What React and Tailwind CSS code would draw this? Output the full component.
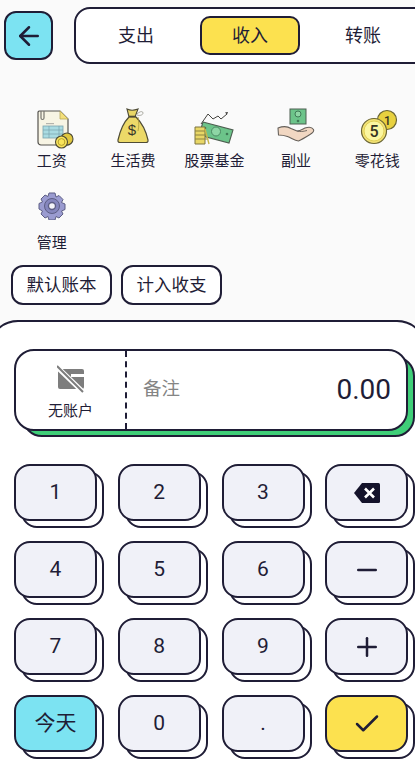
import React from "react";
import { ArrowLeft, Check, Minus, Plus } from "lucide-react";

const ink = "#1f1d36";

const SalaryIcon = () => (
  <svg width="42" height="42" viewBox="-3 -1 42 42" className="overflow-visible">
    <path d="M5 3h21l8 8v26H7a3 3 0 0 1-3-3V4z" fill="#f7f4e4" stroke="#55534f" strokeWidth="1.2" />
    <path d="M26 3l8 8h-8z" fill="#f4df7a" stroke="#b9a95a" strokeWidth="0.8" />
    <path d="M7 3v7a1.5 1.5 0 0 0 3 0V3" fill="none" stroke="#77756f" strokeWidth="1.2" />
    <rect x="12" y="15" width="8" height="1.2" fill="#b5b4ad" />
    <rect x="9" y="18" width="20" height="12" fill="#a9dbe2" stroke="#7aa4ad" strokeWidth="0.8" />
    <path d="M9 22h20M9 26h20M15 18v12M25 18v12" stroke="#7aa4ad" strokeWidth="0.7" />
    <circle cx="33" cy="31" r="6" fill="#e0c73f" stroke="#4e4b35" strokeWidth="1.1" />
    <circle cx="27.5" cy="34" r="6" fill="#f9e45b" stroke="#4e4b35" strokeWidth="1.1" />
    <circle cx="27.5" cy="34" r="3.4" fill="none" stroke="#b39f2c" strokeWidth="1" />
  </svg>
);

const BagIcon = () => (
  <svg width="42" height="42" viewBox="-1 1 42 42" className="overflow-visible">
    <path d="M14 3c3 1.500 7 1.500 11 0l-3 8h-6z" fill="#e9d766" stroke="#4e4b35" strokeWidth="1.1" />
    <path d="M16 11h7c5 5 10 14 12 23 .3 1.600-.5 2.500-2 2.500H7c-1.500 0-2.300-.9-2-2.500 2-9 6-18 11-23z" fill="#ecd968" stroke="#4e4b35" strokeWidth="1.2" />
    <path d="M16 10.500h7" stroke="#4e4b35" strokeWidth="1.6" />
    <path d="M24 8c3-3 6-3 6-1s-3 3-6 2" fill="none" stroke="#a9a9a0" strokeWidth="1" />
    <path d="M25 11c1 5 1 10 0 14" fill="none" stroke="#a89a3c" strokeWidth="0.8" />
    <text x="19" y="29" textAnchor="middle" fontSize="15" fontFamily="Liberation Sans, sans-serif" fill="#3a382b">$</text>
  </svg>
);

const StockIcon = () => (
  <svg width="42" height="42" viewBox="0 0 42 42">
    <path d="M8 17L15 7l5 5 5-3 3 3 6-5" fill="none" stroke="#44433f" strokeWidth="1" />
    <path d="M35 5l-3 .5 2 2z" fill="#33322f" />
    <path d="M10 15l30 8-4 13-30-8z" fill="#6cc48a" stroke="#4d5e50" strokeWidth="1.1" />
    <circle cx="23" cy="24.500" r="4.500" fill="#8ed6a5" stroke="#4c8a63" strokeWidth="1" />
    <circle cx="34" cy="27" r="1.300" fill="#3f7a56" />
    <circle cx="12" cy="21" r="1.300" fill="#3f7a56" />
    <path d="M2 20h10v17H2z" fill="#e9d766" stroke="#7d7440" strokeWidth="1" />
    <path d="M2 24h11M2 28h12M2 32h13" stroke="#8d8342" strokeWidth="1" />
    <path d="M12 22l4 15" stroke="#c8b64a" strokeWidth="1.4" />
  </svg>
);

const HandIcon = () => (
  <svg width="42" height="42" viewBox="0 0 42 42">
    <rect x="15" y="2" width="16" height="15" fill="#6cc48a" stroke="#4d5e50" strokeWidth="1" />
    <circle cx="23" cy="7" r="3" fill="#8ed6a5" stroke="#3f7a56" strokeWidth="1" />
    <circle cx="23" cy="14" r="1.300" fill="#3f7a56" />
    <path d="M3 21c5-2 10-1.500 13 .5l6 2.500c2 .3 5-1.500 8-3 3-1 7-1 8.500 1.500 1 2-1 3.500-3.500 5-4 2.500-8 5-11.500 6.500-4-.5-7-3-11-4.500-3-1-6-1.500-9-1.500z" fill="#f1d7c2" stroke="#66605a" strokeWidth="1.100" strokeLinejoin="round" />
    <path d="M22 24c3 1 6 .5 10-.5" fill="none" stroke="#66605a" strokeWidth="0.9" />
  </svg>
);

const CoinsIcon = () => (
  <svg width="42" height="42" viewBox="-2 0 42 42" className="overflow-visible">
    <circle cx="29" cy="13" r="9.500" fill="#e8d13f" stroke="#6a6534" strokeWidth="1.200" />
    <text x="29.500" y="17.500" textAnchor="middle" fontSize="12" fontWeight="500" fontFamily="Roboto, sans-serif" fill="#35331f">1</text>
    <circle cx="16" cy="24" r="12.500" fill="#f2e275" stroke="#6a6534" strokeWidth="1.200" />
    <circle cx="16" cy="24" r="10" fill="#fbf6a0" stroke="#e0cf55" strokeWidth="1" />
    <text x="16" y="30" textAnchor="middle" fontSize="16" fontWeight="500" fontFamily="Roboto, sans-serif" fill="#35331f">5</text>
  </svg>
);

const GearIcon = () => (
  <svg width="28" height="28" viewBox="0 0 28 28" className="mb-[8px]">
    <path d="M11 1h6l1 4 3-1.500 4 4-1.500 3 3.500 1.500v5.500l-3.500 1.500 1.500 3-4 4-3-1.500-1 3.500h-6l-1-3.500-3 1.500-4-4 1.500-3L1 17V11.500L4.500 10 3 7l4-4 3 1.500z" fill="#9a9bd0" stroke="#5d5e85" strokeWidth="1" strokeLinejoin="round" />
    <circle cx="14" cy="14" r="7.500" fill="#8586bd" stroke="#5d5e85" strokeWidth="1" />
    <circle cx="14" cy="14" r="3.500" fill="#f4f4f8" stroke="#5d5e85" strokeWidth="1.400" />
  </svg>
);

const NoCardIcon = () => (
  <svg width="28" height="28" viewBox="0 0 28 28">
    <rect x="1" y="4" width="26" height="20" rx="2" fill="#7d7d7d" />
    <rect x="14" y="9" width="13" height="3" fill="#fff" />
    <path d="M-1 1l27 26" stroke="#fff" strokeWidth="5" />
    <path d="M0 1l26 26" stroke="#7d7d7d" strokeWidth="2" />
  </svg>
);

const BackspaceIcon = () => (
  <svg width="26" height="20" viewBox="0 0 26 20">
    <path d="M8 0h16.500a1.500 1.500 0 0 1 1.500 1.500v17a1.500 1.500 0 0 1-1.500 1.500H8L0 10z" fill="#14132b" />
    <path d="M11 5.500l9 9M20 5.500l-9 9" stroke="#fff" strokeWidth="2.600" />
  </svg>
);

const categories = [
  { label: "工资", icon: <SalaryIcon /> },
  { label: "生活费", icon: <BagIcon /> },
  { label: "股票基金", icon: <StockIcon /> },
  { label: "副业", icon: <HandIcon /> },
  { label: "零花钱", icon: <CoinsIcon /> },
  { label: "管理", icon: <GearIcon /> },
];

const keys = [
  { t: "1" }, { t: "2" }, { t: "3" }, { icon: <BackspaceIcon /> },
  { t: "4" }, { t: "5" }, { t: "6" }, { icon: <Minus size={30} strokeWidth={2} /> },
  { t: "7" }, { t: "8" }, { t: "9" }, { icon: <Plus size={30} strokeWidth={2} /> },
  { t: "今天", bg: "bg-[#7ce3f2]" }, { t: "0" }, { t: "." }, { icon: <Check size={30} strokeWidth={2} />, bg: "bg-[#fce14f]" },
];

function Key({ t, icon, bg = "bg-[#f0f1f8]" }) {
  return (
    <div className="relative h-[64px] w-[91px]">
      <div className="absolute left-[7px] top-[7px] h-[57px] w-[83px] rounded-[16px] border-2 border-[#1f1d36] bg-white" />
      <div className={`relative flex h-[57px] w-[83px] items-center justify-center rounded-[16px] border-2 border-[#1f1d36] text-[21px] text-[#1f1d36] ${bg}`}>
        {icon || t}
      </div>
    </div>
  );
}

export default function App() {
  return (
    <div
      className="relative h-[762px] w-[415px] overflow-hidden bg-[#fafafa] text-[#1f1d36]"
      style={{ fontFamily: '"Roboto", "Noto Sans CJK SC", sans-serif' }}
    >
      {/* top bar */}
      <div className="flex items-center pl-[4px] pt-[7px]">
        <div className="flex h-[49px] w-[49px] shrink-0 items-center justify-center rounded-[12px] border-2 border-[#1f1d36] bg-[#7ce3f2]">
          <ArrowLeft size={30} strokeWidth={2} color={ink} />
        </div>
        <div className="ml-[21px] flex h-[57px] w-[360px] shrink-0 items-center rounded-[16px] border-2 border-[#1f1d36] bg-white pl-[10px] text-[18px]">
          <div className="flex h-[39px] w-[100px] items-center justify-center">支出</div>
          <div className="ml-[14px] flex h-[39px] w-[100px] items-center justify-center rounded-[10px] border-2 border-[#1f1d36] bg-[#fce14f]">收入</div>
          <div className="ml-[13px] flex h-[39px] w-[100px] items-center justify-center">转账</div>
        </div>
      </div>

      {/* categories */}
      <div className="ml-[11px] mt-[44px] grid w-[407px] grid-cols-5">
        {categories.map((c) => (
          <div key={c.label} className="flex h-[82px] flex-col items-center">
            <div className="flex h-[40px] w-[42px] items-center justify-center">{c.icon}</div>
            <div className="mt-[3px] text-[15px] leading-[20px]">{c.label}</div>
          </div>
        ))}
      </div>

      {/* book + flag */}
      <div className="mt-[-7px] flex gap-[9px] px-[11px]">
        {["默认账本", "计入收支"].map((b) => (
          <div key={b} className="flex h-[40px] w-[101px] items-center justify-center rounded-[12px] border-2 border-[#1f1d36] bg-white text-[17.5px]">
            {b}
          </div>
        ))}
      </div>

      {/* bottom sheet */}
      <div className="mx-[-12px] mt-[15px] h-[460px] rounded-t-[30px] border-2 border-[#1f1d36] bg-white pl-[24px] pt-[27px]">
        <div className="relative h-[89px] w-[402px]">
          <div className="absolute left-[8px] top-[7px] h-[81px] w-[393px] rounded-[20px] border-2 border-[#1f1d36] bg-[#3fcf78]" />
          <div className="relative flex h-[82px] w-[394px] rounded-[20px] border-2 border-[#1f1d36] bg-white">
            <div className="flex w-[111px] flex-col items-center border-r-2 border-dashed border-[#1f1d36] pt-[14px]">
              <NoCardIcon />
              <div className="mt-[8px] text-[15px] leading-[20px]">无账户</div>
            </div>
            <div className="flex flex-1 items-center justify-between pl-[16px] pr-[15px]">
              <span className="text-[18.5px] text-[#858585]">备注</span>
              <span className="text-[28px]">0.00</span>
            </div>
          </div>
        </div>

        <div className="mt-[26px] grid w-[415px] grid-cols-4 gap-y-[13px]">
          {keys.map((k, i) => (
            <Key key={i} {...k} />
          ))}
        </div>
      </div>
    </div>
  );
}
